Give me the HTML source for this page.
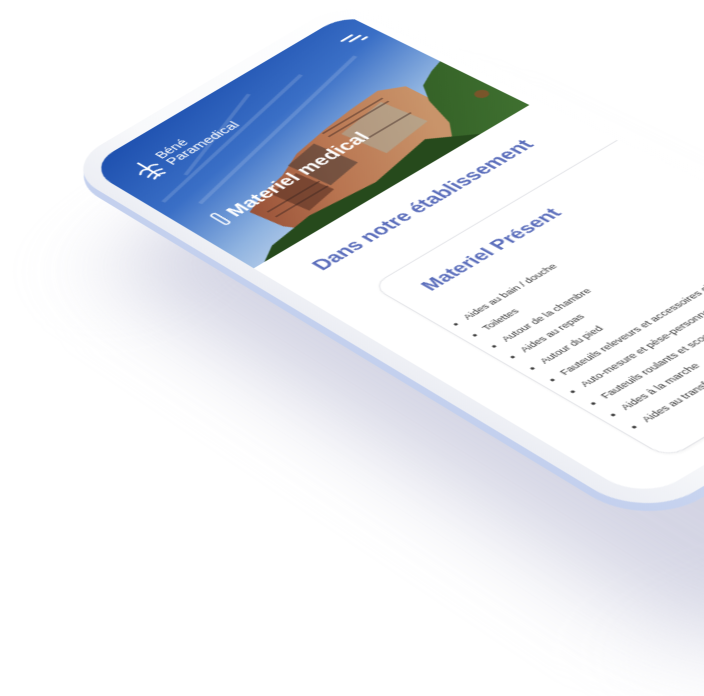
<!DOCTYPE html>
<html><head><meta charset="utf-8"><style>
html,body{margin:0;padding:0;width:704px;height:696px;overflow:hidden;background:#fff;font-family:"Liberation Sans",sans-serif}
#w{position:absolute;left:0;top:0;width:0;height:0;transform-origin:0 0;
transform:matrix3d(0.83403,-0.49330,0,0.000002013, 0.7165,0.39535,0,-0.000285, 0,0,1,0, 106,168,0,1)}
.sh{position:absolute;left:-60px;top:40px;width:340px;height:680px;border-radius:60px;background:#c9cadd;filter:blur(45px);opacity:.8;transform:translate(-40px,60px)}
.edge{position:absolute;left:-34px;top:-24px;width:356px;height:656px;border-radius:52px;background:linear-gradient(90deg,#c3d0ee,#dfe6f6)}
.body{position:absolute;left:-27px;top:-30px;width:350px;height:654px;border-radius:48px;background:linear-gradient(90deg,#eceef4,#f8f9fb 25%,#fff)}
.scr{position:absolute;left:-12px;top:-14px;width:320px;height:622px;border-radius:34px;background:#fff;overflow:hidden}
.in{position:absolute;left:12px;top:14px;width:300px;height:600px}
.hero{position:absolute;left:-12px;top:-14px;width:312px;height:214px}
.t{position:absolute;white-space:nowrap}
.h1{left:24px;top:226px;font-size:19.5px;font-weight:bold;color:#5a6dbb}
.card{position:absolute;left:36px;top:285px;width:300px;height:300px;border:1px solid #e3e4e8;border-radius:16px;box-shadow:0 1px 3px rgba(0,0,0,.06)}
.h2{left:64px;top:307px;font-size:18.5px;font-weight:bold;color:#5a6dbb}
ul{position:absolute;left:44px;top:358px;margin:0;padding:0 0 0 13px;font-size:9.5px;line-height:19.8px;color:#333;white-space:nowrap}
</style></head><body>
<div id="w">
 <div class="sh"></div>
 <div class="edge"></div>
 <div class="body"></div>
 <div class="scr"><div class="in">
  <svg class="hero" viewBox="-12 -14 312 214" width="312" height="214">
   <defs>
    <linearGradient id="sky" x1="0" y1="0" x2="0.3" y2="1">
     <stop offset="0" stop-color="#1d4fae"/><stop offset="0.45" stop-color="#3a6fc6"/><stop offset="0.8" stop-color="#8fb3e0"/><stop offset="1" stop-color="#b9cfea"/>
    </linearGradient>
    <linearGradient id="bld" x1="0" y1="0" x2="1" y2="0.3">
     <stop offset="0" stop-color="#8e4630"/><stop offset="0.5" stop-color="#b87450"/><stop offset="1" stop-color="#c9946a"/>
    </linearGradient>
    <linearGradient id="gr" x1="0" y1="0" x2="1" y2="1">
     <stop offset="0" stop-color="#2f5a22"/><stop offset="1" stop-color="#3f7030"/>
    </linearGradient>
   </defs>
   <rect x="-12" y="-14" width="312" height="214" fill="url(#sky)"/>
   <g stroke="#fff" stroke-opacity=".15" stroke-width="4" fill="none">
    <path d="M0 75 L210 25"/><path d="M20 100 L260 40"/><path d="M40 60 L160 12"/>
   </g>
   <polygon points="40,140 70,128 95,122 125,108 165,100 200,95 235,92 255,105 255,150 235,190 120,200 60,200 45,175" fill="url(#bld)"/>
   <polygon points="70,135 105,128 110,168 75,175" fill="#6b3d2c" opacity=".8"/>
   <polygon points="108,115 145,108 150,155 112,162" fill="#4a3a36" opacity=".6"/>
   <polygon points="170,115 225,106 230,155 175,163" fill="#a7b3a8" opacity=".5"/>
   <g fill="#3c2520" opacity=".45">
    <rect x="160" y="102" width="70" height="2"/><rect x="160" y="109" width="70" height="2"/><rect x="50" y="150" width="60" height="2"/><rect x="50" y="160" width="60" height="2"/><rect x="175" y="135" width="55" height="2"/>
   </g>
   <polygon points="215,200 240,170 252,135 265,115 285,105 300,100 300,200" fill="url(#gr)"/>
   <polygon points="0,200 20,188 70,180 140,186 210,172 245,200" fill="#264a1c"/>
   <circle cx="287" cy="160" r="6" fill="#a3472a" opacity=".6"/>
   <g fill="#fff">
    <rect x="268" y="13" width="14" height="2.6" rx="1.3"/><rect x="272" y="19" width="14" height="2.6" rx="1.3"/><rect x="281" y="25" width="7" height="2.6" rx="1.3"/>
   </g>
   <g fill="none" stroke="#fff" stroke-width="2.2" stroke-linecap="round">
    <path d="M14 30 Q20 24 24 30 Q28 24 34 30"/><path d="M24 16 V44"/><path d="M16 38 Q24 34 32 38"/><path d="M18 44 Q24 40 30 44"/>
   </g>
   <text x="42" y="27" font-family="Liberation Sans" font-size="14" fill="#fff">Béné</text>
   <text x="42" y="41" font-family="Liberation Sans" font-size="14.5" fill="#fff">Paramedical</text>
   <rect x="14" y="119" width="5" height="20" rx="2.5" fill="none" stroke="#fff" stroke-width="1.6"/>
   <text x="27" y="137" font-family="Liberation Sans" font-weight="bold" font-size="20" fill="#fff">Materiel medical</text>
  </svg>
  <div class="t h1">Dans notre établissement</div>
  <div class="card"></div>
  <div class="t h2">Materiel Présent</div>
  <ul>
   <li>Aides au bain / douche</li>
   <li>Toilettes</li>
   <li>Autour de la chambre</li>
   <li>Aides au repas</li>
   <li>Autour du pied</li>
   <li>Fauteuils releveurs et accessoires chambre</li>
   <li>Auto-mesure et pèse-personnes</li>
   <li>Fauteuils roulants et scooters</li>
   <li>Aides à la marche</li>
   <li>Aides au transfert</li>
  </ul>
 </div></div>
</div>
</body></html>
